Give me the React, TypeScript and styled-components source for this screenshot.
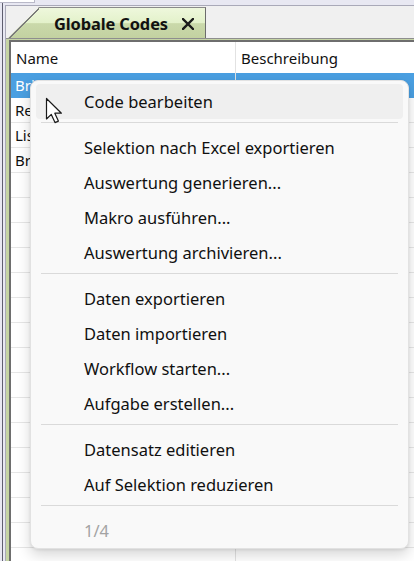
import React from 'react';
import styled, { createGlobalStyle } from 'styled-components';

const GlobalStyle = createGlobalStyle`
  html, body {
    margin: 0;
    padding: 0;
    background: #e8e8f2;
  }

  body {
    font-family: 'Noto Sans', 'Open Sans', sans-serif;
  }
`;

const Screen = styled.div`
  position: relative;
  width: 414px;
  height: 561px;
  overflow: hidden;
  background: #e8e8f2;
  display: flex;
  flex-direction: column;
`;

const TopStub = styled.div`
  width: 34px;
  height: 2px;
  background: #ffffff;
  border-right: 1px solid #b9b9c8;
  border-bottom: 1px solid #b9b9c8;
`;

const Frame = styled.div`
  flex: 1;
  display: flex;
  margin-left: 2px;
  padding: 2px 0 0 2px;
  border-left: 1px solid #5e5e6e;
  min-height: 0;
`;

const Workspace = styled.div`
  flex: 1;
  display: flex;
  flex-direction: column;
  background: #f0f0f0;
  border-top: 1px solid #a9a9b8;
  border-left: 1px solid #a9a9b8;
  min-width: 0;
`;

const TabStrip = styled.div`
  height: 32px;
  display: flex;
  align-items: flex-end;
  padding-left: 2px;
  border-bottom: 1px solid #8e8e8e;
`;

const Tab = styled.div`
  position: relative;
  box-sizing: border-box;
  width: 198px;
  height: 31px;
  display: flex;
  align-items: center;
  padding-left: 46px;
  gap: 14px;
  border-top: 1px solid #8a8a8a;
  border-right: 1px solid #6c6c6c;
  clip-path: polygon(31px 0, 100% 0, 100% 100%, 0 100%);
  background:
    linear-gradient(
        to bottom right,
        transparent calc(50% - 0.2px),
        #7c7c7c calc(50% - 0.2px),
        #7c7c7c calc(50% + 1px),
        transparent calc(50% + 1px)
      )
      left top / 31px 31px no-repeat,
    linear-gradient(
      to bottom,
      #eef8dc 0%,
      #e3f1ca 50%,
      #cad9aa 52%,
      #c3d2a1 100%
    );
`;

const TabTitle = styled.span`
  font-size: 16.4px;
  font-weight: 700;
  color: #111111;
  letter-spacing: -0.1px;
`;

const CloseIcon = styled.svg`
  width: 12px;
  height: 12px;
  margin-top: 1px;
`;

const Body = styled.div`
  flex: 1;
  display: flex;
  padding: 1px 0 0 3px;
  background: #c5d4a4;
  min-height: 0;
`;

const Grid = styled.div`
  flex: 1;
  display: flex;
  flex-direction: column;
  background: #ffffff;
  border-top: 2px solid #6e6e6e;
  border-left: 2px solid #6e6e6e;
  overflow: hidden;
  font-size: 15px;
  color: #111111;
`;

const HeaderRow = styled.div`
  display: flex;
  height: 31px;
  flex-shrink: 0;
`;

const HeaderCell = styled.div<{ $width?: number }>`
  box-sizing: border-box;
  flex: ${({ $width }) => ($width ? `0 0 ${$width}px` : '1')};
  display: flex;
  align-items: center;
  padding-left: 5px;
  border-right: ${({ $width }) => ($width ? '1px solid #e2e2e2' : 'none')};
  white-space: nowrap;
`;

const Row = styled.div<{ $selected?: boolean }>`
  display: flex;
  height: 25px;
  flex-shrink: 0;
  box-sizing: border-box;
  border-bottom: 1px solid ${({ $selected }) => ($selected ? '#4a9fe1' : '#e6e6e6')};
  background: ${({ $selected }) => ($selected ? '#4a9fe1' : '#ffffff')};
  color: ${({ $selected }) => ($selected ? '#ffffff' : '#111111')};
`;

const Cell = styled.div<{ $width?: number }>`
  box-sizing: border-box;
  flex: ${({ $width }) => ($width ? `0 0 ${$width}px` : '1')};
  display: flex;
  align-items: center;
  padding-left: 4px;
  border-right: ${({ $width }) => ($width ? '1px solid #e2e2e2' : 'none')};
  white-space: nowrap;
  overflow: hidden;
`;

const Menu = styled.div`
  position: absolute;
  left: 30px;
  top: 80px;
  width: 379px;
  box-sizing: border-box;
  padding: 3px 0 0;
  background: #f9f9f9;
  border: 1px solid #e2e2e2;
  border-radius: 8px;
  box-shadow: 0 6px 14px rgba(0, 0, 0, 0.16), 0 1px 3px rgba(0, 0, 0, 0.08);
  font-size: 16.5px;
`;

const MenuItem = styled.div<{ $active?: boolean; $disabled?: boolean }>`
  height: 35px;
  margin: 0 5px;
  padding-left: 48px;
  display: flex;
  align-items: center;
  border-radius: 4px;
  background: ${({ $active }) => ($active ? '#efefef' : 'transparent')};
  color: ${({ $disabled }) => ($disabled ? '#a3a3a3' : '#101010')};
  white-space: nowrap;
`;

const Separator = styled.div`
  height: 1px;
  margin: 3px 10px 7px;
  background: #dadada;
`;

const Pointer = styled.svg`
  position: absolute;
  left: 45px;
  top: 97px;
  width: 20px;
  height: 28px;
`;

type Entry = { label: string; active?: boolean; disabled?: boolean } | 'sep';

const menuEntries: Entry[] = [
  { label: 'Code bearbeiten', active: true },
  'sep',
  { label: 'Selektion nach Excel exportieren' },
  { label: 'Auswertung generieren...' },
  { label: 'Makro ausführen...' },
  { label: 'Auswertung archivieren...' },
  'sep',
  { label: 'Daten exportieren' },
  { label: 'Daten importieren' },
  { label: 'Workflow starten...' },
  { label: 'Aufgabe erstellen...' },
  'sep',
  { label: 'Datensatz editieren' },
  { label: 'Auf Selektion reduzieren' },
  'sep',
  { label: '1/4', disabled: true },
];

const codes = [
  { name: 'Briefkopf', text: '' },
  { name: 'Rechnung', text: '' },
  { name: 'Liste', text: '' },
  { name: 'Brief', text: '' },
];

const NAME_COL = 225;
const EMPTY_ROWS = 16;

const App: React.FC = () => {
  return (
    <Screen>
      <GlobalStyle />
      <TopStub />
      <Frame>
        <Workspace>
          <TabStrip>
            <Tab>
              <TabTitle>Globale Codes</TabTitle>
              <CloseIcon viewBox="0 0 12 12">
                <path d="M1 1 L11 11 M11 1 L1 11" stroke="#1a1a1a" strokeWidth="2.4" strokeLinecap="square" />
              </CloseIcon>
            </Tab>
          </TabStrip>
          <Body>
            <Grid>
              <HeaderRow>
                <HeaderCell $width={NAME_COL}>Name</HeaderCell>
                <HeaderCell>Beschreibung</HeaderCell>
              </HeaderRow>
              {codes.map((code, i) => (
                <Row key={code.name} $selected={i === 0}>
                  <Cell $width={NAME_COL}>{code.name}</Cell>
                  <Cell>{code.text}</Cell>
                </Row>
              ))}
              {Array.from({ length: EMPTY_ROWS }).map((_, i) => (
                <Row key={`empty-${i}`}>
                  <Cell $width={NAME_COL} />
                  <Cell />
                </Row>
              ))}
            </Grid>
          </Body>
        </Workspace>
      </Frame>

      <Menu>
        {menuEntries.map((entry, i) =>
          entry === 'sep' ? (
            <Separator key={`sep-${i}`} />
          ) : (
            <MenuItem key={entry.label} $active={entry.active} $disabled={entry.disabled}>
              {entry.label}
            </MenuItem>
          )
        )}
      </Menu>

      <Pointer viewBox="0 0 20 28">
        <path
          d="M1.5 1.5 L1.5 22 L6.3 17.4 L10 25.6 L13.4 24.1 L9.8 16.2 L16.4 16.2 Z"
          fill="#ffffff"
          stroke="#1a1a1a"
          strokeWidth="1.2"
          strokeLinejoin="round"
        />
      </Pointer>
    </Screen>
  );
};

export default App;
